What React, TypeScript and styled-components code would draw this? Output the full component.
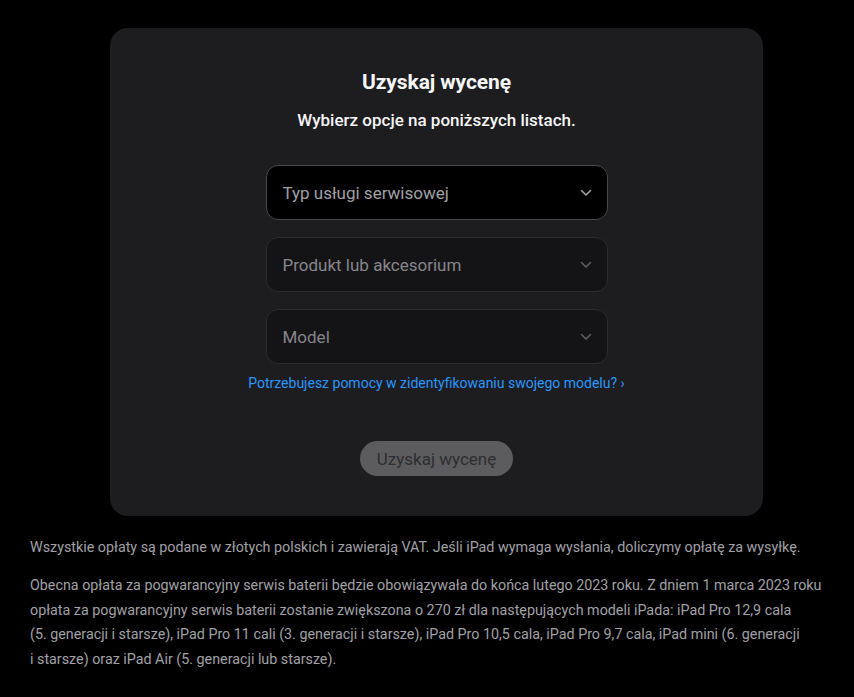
import styled, { createGlobalStyle } from "styled-components";

const GlobalStyle = createGlobalStyle`
  html, body {
    margin: 0;
    padding: 0;
    background: #000;
  }
  body {
    font-family: Roboto, "Liberation Sans", Arial, sans-serif;
    -webkit-font-smoothing: antialiased;
  }
`;

const Page = styled.div`
  width: 813px;
  padding: 28px 0 0 30px;
  box-sizing: content-box;
`;

const Card = styled.section`
  width: 653px;
  height: 488px;
  margin: 0 auto;
  background: #1d1d1f;
  border-radius: 18px;
  box-sizing: border-box;
  padding-top: 40px;
  display: flex;
  flex-direction: column;
  align-items: center;
`;

const Title = styled.h2`
  margin: 0;
  color: #f5f5f7;
  font-size: 21px;
  font-weight: 700;
  line-height: 28px;
  letter-spacing: -0.1px;
`;

const Subtitle = styled.p`
  margin: 12px 0 0;
  color: #f5f5f7;
  font-size: 17px;
  font-weight: 500;
  line-height: 24px;
`;

const Fields = styled.div`
  margin-top: 33px;
  display: flex;
  flex-direction: column;
  gap: 17px;
  width: 342px;
`;

const Select = styled.div<{ $active?: boolean }>`
  height: 55px;
  box-sizing: border-box;
  border-radius: 12px;
  border: 1px solid ${(p) => (p.$active ? "#48484a" : "#2c2c2e")};
  background: ${(p) => (p.$active ? "#000" : "#141416")};
  display: flex;
  align-items: center;
  justify-content: space-between;
  padding: 0 15px 0 16px;
  color: ${(p) => (p.$active ? "#a1a1a6" : "#86868b")};
  font-size: 17px;
  svg {
    color: ${(p) => (p.$active ? "#a1a1a6" : "#5e5e62")};
  }
`;

const HelpLink = styled.a`
  margin-top: 9px;
  color: #2997ff;
  font-size: 14px;
  line-height: 20px;
  text-decoration: none;
`;

const SubmitButton = styled.button`
  margin-top: 48px;
  height: 35px;
  padding: 0 17px;
  border: 0;
  border-radius: 18px;
  background: #5c5c5e;
  color: #2e2e30;
  font-family: inherit;
  font-size: 17px;
`;

const Footer = styled.div`
  width: 800px;
  padding: 19px 0 0;
  color: #a1a1a6;
  font-size: 14.3px;
  line-height: 24.5px;
  p {
    margin: 0 0 13.5px;
  }
`;

const Chevron = () => (
  <svg width="12" height="8" viewBox="0 0 12 8" fill="none">
    <path
      d="M1.5 1.5 6 6l4.5-4.5"
      stroke="currentColor"
      strokeWidth="1.6"
      strokeLinecap="round"
      strokeLinejoin="round"
    />
  </svg>
);

const options = [
  { label: "Typ usługi serwisowej", active: true },
  { label: "Produkt lub akcesorium", active: false },
  { label: "Model", active: false },
];

export default function App() {
  return (
    <>
      <GlobalStyle />
      <Page>
        <Card>
          <Title>Uzyskaj wycenę</Title>
          <Subtitle>Wybierz opcje na poniższych listach.</Subtitle>
          <Fields>
            {options.map((o) => (
              <Select key={o.label} $active={o.active}>
                <span>{o.label}</span>
                <Chevron />
              </Select>
            ))}
          </Fields>
          <HelpLink href="#">
            Potrzebujesz pomocy w zidentyfikowaniu swojego modelu? ›
          </HelpLink>
          <SubmitButton disabled>Uzyskaj wycenę</SubmitButton>
        </Card>
        <Footer>
          <p>
            Wszystkie opłaty są podane w złotych polskich i zawierają VAT. Jeśli
            iPad wymaga wysłania, doliczymy opłatę za wysyłkę.
          </p>
          <p>
            Obecna opłata za pogwarancyjny serwis baterii będzie obowiązywała do
            końca lutego 2023 roku. Z dniem 1 marca 2023 roku opłata za
            pogwarancyjny serwis baterii zostanie zwiększona o 270 zł dla
            następujących modeli iPada: iPad Pro 12,9 cala (5.&nbsp;generacji i
            starsze), iPad Pro 11 cali (3. generacji i starsze), iPad Pro 10,5
            cala, iPad Pro 9,7 cala, iPad mini (6. generacji i&nbsp;starsze)
            oraz iPad Air (5. generacji lub starsze).
          </p>
        </Footer>
      </Page>
    </>
  );
}
